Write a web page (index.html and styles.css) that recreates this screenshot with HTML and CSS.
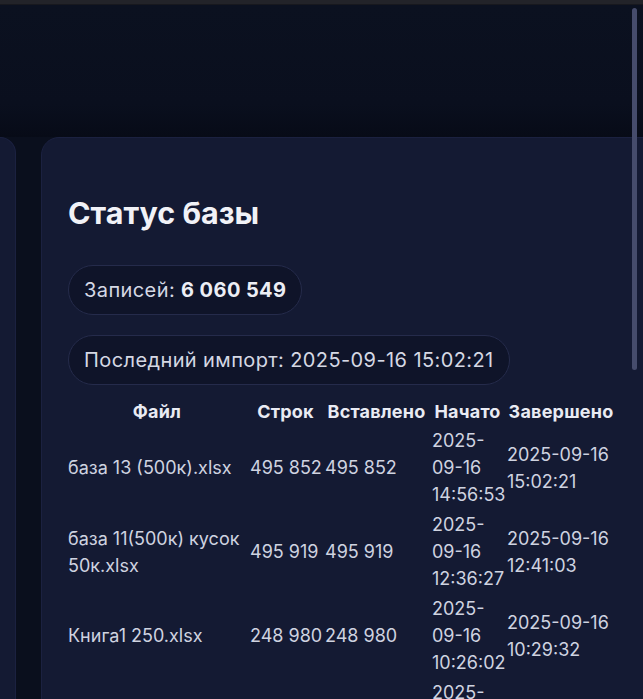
FILE: index.html
```html
<!DOCTYPE html>
<html lang="ru">
<head>
<meta charset="utf-8">
<title>Статус базы</title>
<link rel="stylesheet" href="styles.css">
</head>
<body>
<div class="topbar"></div>
<div class="header"></div>
<div class="cards">
  <section class="card card-side"></section>
  <section class="card card-main">
    <h2 class="title">Статус базы</h2>
    <div class="pills">
      <div class="pill">Записей: <b>6 060 549</b></div>
      <div class="pill">Последний импорт: 2025-09-16 15:02:21</div>
    </div>
    <table class="imports">
      <colgroup>
        <col class="c-file"><col class="c-rows"><col class="c-ins"><col class="c-start"><col class="c-end">
      </colgroup>
      <thead>
        <tr><th>Файл</th><th>Строк</th><th>Вставлено</th><th>Начато</th><th>Завершено</th></tr>
      </thead>
      <tbody>
        <tr><td>база 13 (500к).xlsx</td><td class="num">495 852</td><td class="num">495 852</td><td>2025-09-16 14:56:53</td><td>2025-09-16 15:02:21</td></tr>
        <tr><td>база 11(500к) кусок 50к.xlsx</td><td class="num">495 919</td><td class="num">495 919</td><td>2025-09-16 12:36:27</td><td>2025-09-16 12:41:03</td></tr>
        <tr><td>Книга1 250.xlsx</td><td class="num">248 980</td><td class="num">248 980</td><td>2025-09-16 10:26:02</td><td>2025-09-16 10:29:32</td></tr>
        <tr><td>Книга1 250.xlsx</td><td class="num">248 980</td><td class="num">248 980</td><td>2025-09-16 10:20:11</td><td>2025-09-16 10:23:40</td></tr>
      </tbody>
    </table>
  </section>
</div>
<div class="scroll-thumb"></div>
</body>
</html>
```

FILE: styles.css
```css
html, body {
  margin: 0;
  padding: 0;
  height: 100%;
  overflow: hidden;
}

body {
  background: #0a0f1d;
  font-family: Inter, "Noto Sans", "Liberation Sans", sans-serif;
  color: #e8eaf2;
  position: relative;
}

.topbar {
  height: 4px;
  background: #222329;
  border-bottom: 1px solid #17181e;
}

.header {
  height: 132px;
  background: linear-gradient(#0b1120 0%, #0a0f1e 75%, #070b17 100%);
}

.cards {
  display: grid;
  grid-template-columns: 16px 620px;
  column-gap: 25px;
  height: 600px;
}

.card {
  background: #141a33;
  border: 1px solid #1b2140;
}

.card-side {
  border-left: none;
  border-radius: 0 16px 0 0;
}

.card-main {
  border-radius: 18px 0 0 0;
  padding: 0 0 0 26px;
}

.title {
  margin: 57px 0 0;
  font-size: 30.5px;
  font-weight: 700;
  line-height: 36px;
  color: #f1f2f7;
  letter-spacing: 0;
}

.pills {
  display: flex;
  flex-direction: column;
  align-items: flex-start;
  gap: 20px;
  margin-top: 34px;
}

.pill {
  background: #0f1429;
  border: 1px solid #252b4b;
  border-radius: 999px;
  padding: 10px 15px;
  font-size: 20px;
  line-height: 28px;
  letter-spacing: 0.4px;
  color: #d5d8e4;
}

.pill b {
  font-weight: 700;
  color: #eceef5;
}

.imports {
  margin: 12px 0 0 -3px;
  table-layout: fixed;
  width: 553px;
  border-collapse: separate;
  border-spacing: 2px 1px;
  font-size: 18px;
  line-height: 27px;
}

.c-file { width: 180px; }
.c-rows { width: 73px; }
.c-ins { width: 105px; }
.c-start { width: 73px; }
.c-end { width: 110px; }

.imports th {
  font-weight: 700;
  font-size: 18px;
  letter-spacing: 0.2px;
  color: #e9ebf3;
  padding: 0 1px;
  text-align: center;
  white-space: nowrap;
}

.imports td {
  padding: 1px 1px;
  color: #cfd3e0;
  vertical-align: middle;
  text-align: left;
}

.imports td.num {
  white-space: nowrap;
}

.scroll-thumb {
  position: absolute;
  top: 8px;
  left: 632px;
  width: 5px;
  height: 362px;
  border-radius: 3px;
  background: #464c6c;
}
```
